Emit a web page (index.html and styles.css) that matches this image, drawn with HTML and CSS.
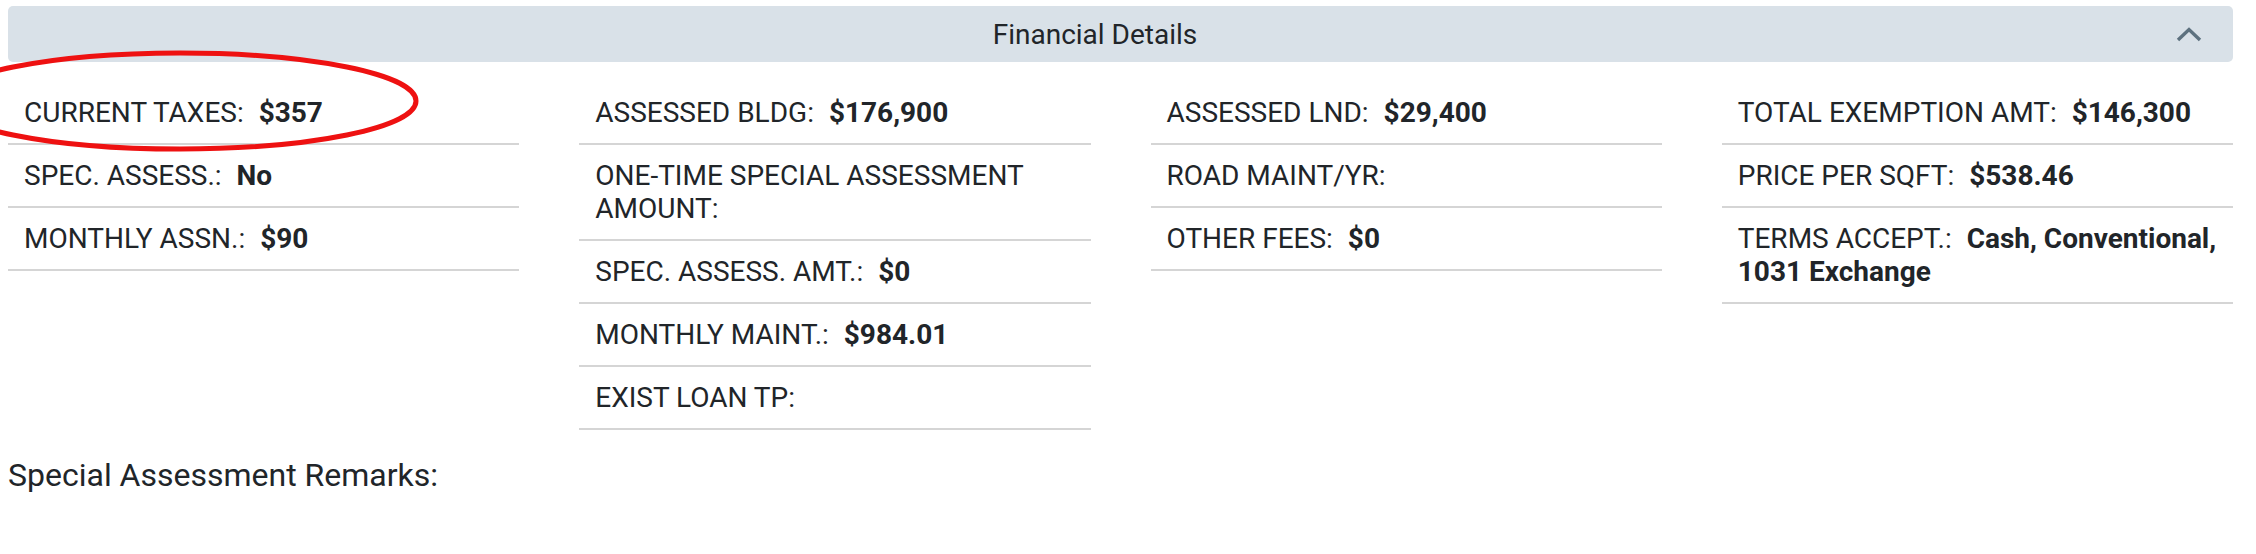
FILE: index.html
```html
<!DOCTYPE html>
<html lang="en">
<head>
<meta charset="utf-8">
<title>Financial Details</title>
<link rel="stylesheet" href="styles.css">
</head>
<body>
<div class="page">
  <div class="panel-head">
    <div class="panel-title">Financial Details</div>
    <div class="panel-toggle">
      <svg class="chevron" width="26" height="15" viewBox="0 0 26 15" aria-hidden="true">
        <polyline points="2,13 13,2.5 24,13" fill="none" stroke="#5d717f" stroke-width="3.4" stroke-linejoin="miter"/>
      </svg>
    </div>
  </div>

  <div class="grid">
    <ul class="col">
      <li class="row"><span class="lbl">CURRENT TAXES:</span> <span class="val">$357</span></li>
      <li class="row"><span class="lbl">SPEC. ASSESS.:</span> <span class="val">No</span></li>
      <li class="row"><span class="lbl">MONTHLY ASSN.:</span> <span class="val">$90</span></li>
    </ul>
    <ul class="col">
      <li class="row"><span class="lbl">ASSESSED BLDG:</span> <span class="val">$176,900</span></li>
      <li class="row"><span class="lbl">ONE-TIME SPECIAL ASSESSMENT AMOUNT:</span></li>
      <li class="row"><span class="lbl">SPEC. ASSESS. AMT.:</span> <span class="val">$0</span></li>
      <li class="row"><span class="lbl">MONTHLY MAINT.:</span> <span class="val">$984.01</span></li>
      <li class="row"><span class="lbl">EXIST LOAN TP:</span></li>
    </ul>
    <ul class="col">
      <li class="row"><span class="lbl">ASSESSED LND:</span> <span class="val">$29,400</span></li>
      <li class="row"><span class="lbl">ROAD MAINT/YR:</span></li>
      <li class="row"><span class="lbl">OTHER FEES:</span> <span class="val">$0</span></li>
    </ul>
    <ul class="col">
      <li class="row"><span class="lbl">TOTAL EXEMPTION AMT:</span> <span class="val">$146,300</span></li>
      <li class="row"><span class="lbl">PRICE PER SQFT:</span> <span class="val">$538.46</span></li>
      <li class="row"><span class="lbl">TERMS ACCEPT.:</span> <span class="val">Cash, Conventional, 1031 Exchange</span></li>
    </ul>
  </div>

  <div class="remarks">Special Assessment Remarks:</div>
</div>

<svg class="annotation" width="480" height="200" viewBox="0 0 480 200" aria-hidden="true">
  <ellipse cx="180" cy="101" rx="236" ry="48" fill="none" stroke="#ee1111" stroke-width="5"/>
</svg>
</body>
</html>
```

FILE: styles.css
```css
html, body {
  margin: 0;
  padding: 0;
  background: #ffffff;
}

body {
  font-family: Roboto, "Liberation Sans", Arial, sans-serif;
  color: #212529;
  position: relative;
}

.page {
  padding: 6px 23px 0 8px;
}

.panel-head {
  display: flex;
  align-items: center;
  height: 56px;
  background: #d9e1e8;
  border-radius: 5px;
  padding: 0 20px 0 17px;
}

.panel-title {
  flex: 1;
  text-align: center;
  font-size: 28px;
  line-height: 33px;
  padding-top: 1px;
}

.panel-toggle {
  width: 48px;
  display: flex;
  justify-content: center;
  align-items: center;
}

.chevron {
  display: block;
}

.grid {
  display: grid;
  grid-template-columns: repeat(4, 1fr);
  column-gap: 60px;
  align-items: start;
  margin-top: 20px;
}

.col {
  list-style: none;
  margin: 0;
  padding: 0;
}

.row {
  padding: 14px 16px;
  font-size: 28px;
  line-height: 33px;
  border-bottom: 2px solid #d5d5d5;
}

.lbl {
  font-weight: 400;
  margin-right: 8px;
}

.val {
  font-weight: 700;
}

.remarks {
  margin-top: 21px;
  font-size: 32px;
  line-height: 48px;
}

.annotation {
  position: absolute;
  top: 0;
  left: 0;
  pointer-events: none;
}
```
